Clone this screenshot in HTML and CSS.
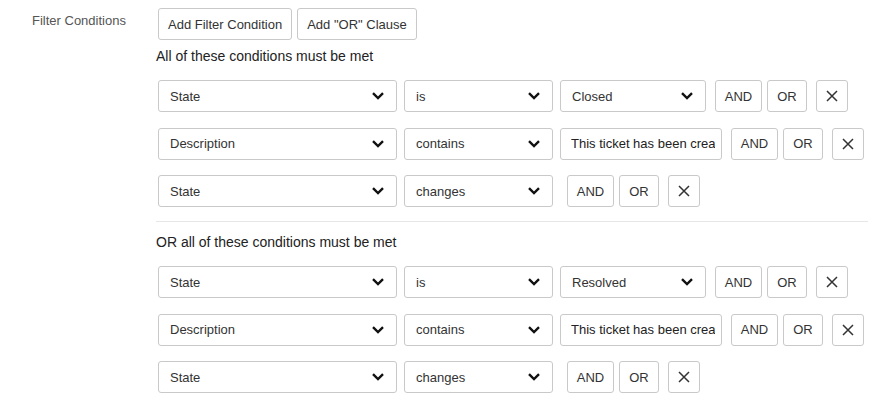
FILE: index.html
```html
<!DOCTYPE html>
<html lang="en">
<head>
  <meta charset="UTF-8">
  <title>Filter Conditions</title>
  <link rel="stylesheet" href="styles.css">
</head>
<body>
  <div class="field">
    <label class="field-label">Filter Conditions</label>
    <div class="field-body">
      <div class="toolbar">
        <button class="btn btn-add">Add Filter Condition</button>
        <button class="btn btn-add">Add "OR" Clause</button>
      </div>

      <div class="clause">
        <p class="clause-title">All of these conditions must be met</p>
        <div class="cond">
          <div class="select sel-field"><span>State</span><svg class="chev" viewBox="0 0 12 8"><path d="M1 1.2 L6 6 L11 1.2"/></svg></div>
          <div class="select sel-op"><span>is</span><svg class="chev" viewBox="0 0 12 8"><path d="M1 1.2 L6 6 L11 1.2"/></svg></div>
          <div class="select sel-value"><span>Closed</span><svg class="chev" viewBox="0 0 12 8"><path d="M1 1.2 L6 6 L11 1.2"/></svg></div>
          <div class="logic">
            <button class="btn btn-and">AND</button>
            <button class="btn btn-or">OR</button>
            <button class="btn btn-del"><svg viewBox="0 0 12 12"><path d="M1 1 L11 11 M11 1 L1 11"/></svg></button>
          </div>
        </div>
        <div class="cond">
          <div class="select sel-field"><span>Description</span><svg class="chev" viewBox="0 0 12 8"><path d="M1 1.2 L6 6 L11 1.2"/></svg></div>
          <div class="select sel-op"><span>contains</span><svg class="chev" viewBox="0 0 12 8"><path d="M1 1.2 L6 6 L11 1.2"/></svg></div>
          <input class="text-value" type="text" value="This ticket has been created">
          <div class="logic">
            <button class="btn btn-and">AND</button>
            <button class="btn btn-or">OR</button>
            <button class="btn btn-del"><svg viewBox="0 0 12 12"><path d="M1 1 L11 11 M11 1 L1 11"/></svg></button>
          </div>
        </div>
        <div class="cond">
          <div class="select sel-field"><span>State</span><svg class="chev" viewBox="0 0 12 8"><path d="M1 1.2 L6 6 L11 1.2"/></svg></div>
          <div class="select sel-op"><span>changes</span><svg class="chev" viewBox="0 0 12 8"><path d="M1 1.2 L6 6 L11 1.2"/></svg></div>
          <div class="logic no-value">
            <button class="btn btn-and">AND</button>
            <button class="btn btn-or">OR</button>
            <button class="btn btn-del"><svg viewBox="0 0 12 12"><path d="M1 1 L11 11 M11 1 L1 11"/></svg></button>
          </div>
        </div>
      </div>

      <div class="clause clause-or">
        <p class="clause-title">OR all of these conditions must be met</p>
        <div class="cond">
          <div class="select sel-field"><span>State</span><svg class="chev" viewBox="0 0 12 8"><path d="M1 1.2 L6 6 L11 1.2"/></svg></div>
          <div class="select sel-op"><span>is</span><svg class="chev" viewBox="0 0 12 8"><path d="M1 1.2 L6 6 L11 1.2"/></svg></div>
          <div class="select sel-value"><span>Resolved</span><svg class="chev" viewBox="0 0 12 8"><path d="M1 1.2 L6 6 L11 1.2"/></svg></div>
          <div class="logic">
            <button class="btn btn-and">AND</button>
            <button class="btn btn-or">OR</button>
            <button class="btn btn-del"><svg viewBox="0 0 12 12"><path d="M1 1 L11 11 M11 1 L1 11"/></svg></button>
          </div>
        </div>
        <div class="cond">
          <div class="select sel-field"><span>Description</span><svg class="chev" viewBox="0 0 12 8"><path d="M1 1.2 L6 6 L11 1.2"/></svg></div>
          <div class="select sel-op"><span>contains</span><svg class="chev" viewBox="0 0 12 8"><path d="M1 1.2 L6 6 L11 1.2"/></svg></div>
          <input class="text-value" type="text" value="This ticket has been created">
          <div class="logic">
            <button class="btn btn-and">AND</button>
            <button class="btn btn-or">OR</button>
            <button class="btn btn-del"><svg viewBox="0 0 12 12"><path d="M1 1 L11 11 M11 1 L1 11"/></svg></button>
          </div>
        </div>
        <div class="cond">
          <div class="select sel-field"><span>State</span><svg class="chev" viewBox="0 0 12 8"><path d="M1 1.2 L6 6 L11 1.2"/></svg></div>
          <div class="select sel-op"><span>changes</span><svg class="chev" viewBox="0 0 12 8"><path d="M1 1.2 L6 6 L11 1.2"/></svg></div>
          <div class="logic no-value">
            <button class="btn btn-and">AND</button>
            <button class="btn btn-or">OR</button>
            <button class="btn btn-del"><svg viewBox="0 0 12 12"><path d="M1 1 L11 11 M11 1 L1 11"/></svg></button>
          </div>
        </div>
      </div>
    </div>
  </div>
</body>
</html>
```

FILE: styles.css
```css
body {
  margin: 0;
  font-family: "Liberation Sans", Arial, sans-serif;
  background-color: #fff;
  color: #333;
}
.field {
  display: flex;
  padding-top: 8px;
}
.field-label {
  width: 124px;
  padding-left: 32px;
  padding-top: 5px;
  font-size: 13px;
  line-height: 15px;
  color: #555;
}
.field-body {
  width: 712px;
}
.toolbar {
  display: flex;
  gap: 5px;
  padding-left: 2px;
}
.btn {
  height: 32px;
  margin: 0;
  background-color: #fff;
  border: 1px solid #c9c9c9;
  border-radius: 3px;
  font-family: inherit;
  font-size: 13px;
  color: #333;
  cursor: pointer;
}
.btn-add {
  padding: 0 9px;
}
.clause-title {
  margin: 8px 0 16px;
  font-size: 14px;
  line-height: 16px;
  color: #222;
}
.clause-or {
  border-top: 1px solid #e6e6e6;
  margin-top: 14px;
  padding-top: 4px;
}
.cond {
  display: flex;
  align-items: center;
  gap: 7px;
  padding-left: 2px;
  margin-bottom: 15.5px;
  height: 32px;
}
.clause .cond:last-child {
  margin-bottom: 0;
}
.select {
  box-sizing: border-box;
  height: 32px;
  display: flex;
  align-items: center;
  justify-content: space-between;
  padding: 0 12px 0 11px;
  border: 1px solid #c9c9c9;
  border-radius: 3px;
  font-size: 13px;
}
.sel-field { width: 239px; }
.sel-op { width: 149px; }
.sel-value { width: 146px; }
.chev {
  width: 12px;
  height: 8px;
  fill: none;
  stroke: #111;
  stroke-width: 2.4;
}
.text-value {
  box-sizing: border-box;
  width: 162px;
  height: 32px;
  margin: 0;
  padding: 0 6px 0 10px;
  border: 1px solid #c9c9c9;
  border-radius: 3px;
  font-family: inherit;
  font-size: 13px;
  color: #222;
}
.logic {
  display: flex;
  gap: 5px;
  margin-left: 2px;
}
.logic.no-value {
  margin-left: 7px;
}
.btn-and {
  width: 47px;
  padding: 0;
}
.btn-or {
  width: 40px;
  padding: 0;
}
.btn-del {
  width: 32px;
  padding: 0;
  margin-left: 4px;
  display: flex;
  align-items: center;
  justify-content: center;
}
.btn-del svg {
  width: 12px;
  height: 12px;
  fill: none;
  stroke: #333;
  stroke-width: 1.5;
}
```
